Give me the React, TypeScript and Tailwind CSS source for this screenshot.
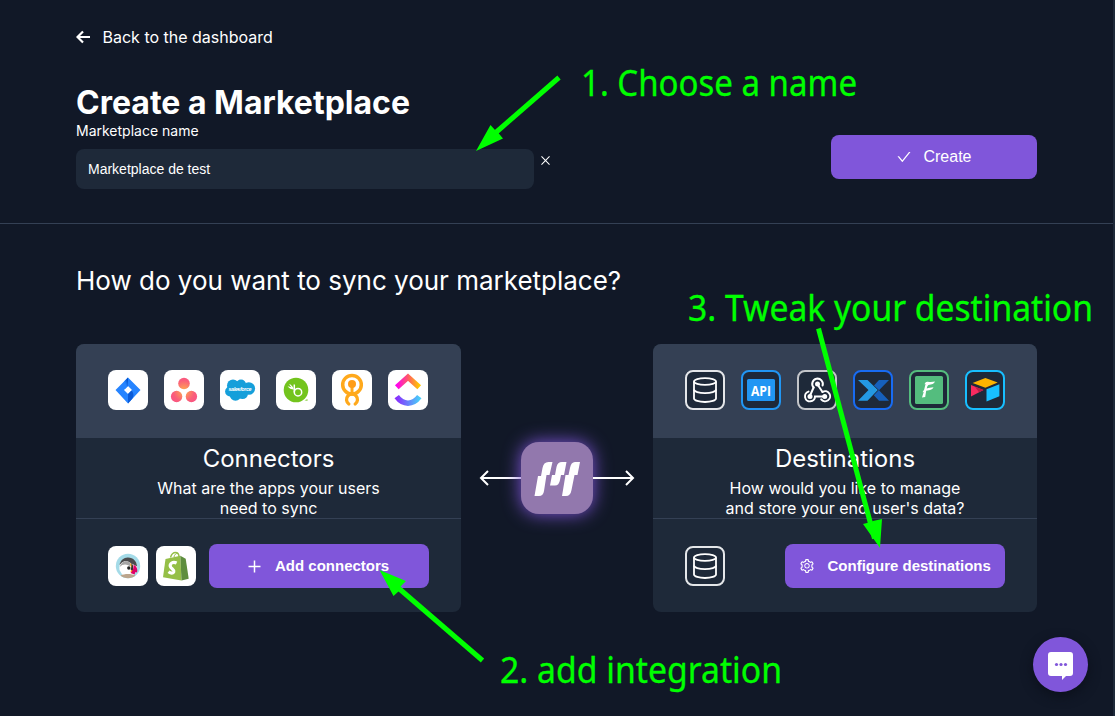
import React from "react";
import { AiOutlineCheck, AiOutlineClose, AiOutlineSetting } from "react-icons/ai";

function WhiteTile({ children }: { children: React.ReactNode }) {
  return (
    <div className="flex size-10 items-center justify-center overflow-hidden rounded-lg bg-white">
      <svg viewBox="0 0 40 40" className="size-10">{children}</svg>
    </div>
  );
}

function DarkTile({ border, children }: { border: string; children: React.ReactNode }) {
  return (
    <div className={`flex size-10 items-center justify-center overflow-hidden rounded-lg border-2 bg-[#1e2939] ${border}`}>
      <svg viewBox="0 0 40 40" className="size-10 shrink-0">{children}</svg>
    </div>
  );
}

function DatabaseMark() {
  return (
    <g fill="none" stroke="#fff" strokeWidth="1.8">
      <ellipse cx="20" cy="11.5" rx="11" ry="3.3" />
      <path d="M9 11.5v17c0 1.900 4.900 3.500 11 3.500s11-1.600 11-3.500v-17" />
      <path d="M9 19.500c0 2 4.900 3.600 11 3.600s11-1.600 11-3.600" />
    </g>
  );
}

function Jira() {
  return (
    <WhiteTile>
      <defs>
        <linearGradient id="jiraTop" x1="1" y1="0" x2="0.3" y2="0.7">
          <stop offset="0.2" stopColor="#0052cc" />
          <stop offset="0.8" stopColor="#2684ff" />
        </linearGradient>
      </defs>
      <path d="M20 7.500 32.500 20 20 33.500 7.500 20ZM20 16l-4 4 4 4 4-4Z" fill="#2684ff" fillRule="evenodd" />
      <path d="M20 7.500v8.500l-3 3c-2-2-2.500-5-.5-8Z" fill="url(#jiraTop)" />
      <path d="M20 33.500V24l3.500-3.500c2 2 2.800 5 .5 8.500Z" fill="#0b5bd8" />
    </WhiteTile>
  );
}

function Asana() {
  return (
    <WhiteTile>
      <defs>
        <radialGradient id="asana" gradientUnits="userSpaceOnUse" cx="20" cy="21" r="15">
          <stop offset="0" stopColor="#ffb04a" />
          <stop offset="0.7" stopColor="#fa5e7a" />
          <stop offset="1" stopColor="#f95484" />
        </radialGradient>
      </defs>
      <g fill="url(#asana)">
        <circle cx="20" cy="13.500" r="5.800" />
        <circle cx="12.600" cy="26.500" r="5.700" />
        <circle cx="27.400" cy="26.500" r="5.700" />
      </g>
    </WhiteTile>
  );
}

function Salesforce() {
  return (
    <WhiteTile>
      <g fill="#159fda">
        <circle cx="13" cy="15.500" r="6" /><circle cx="21" cy="14.500" r="5" />
        <circle cx="28.800" cy="18.500" r="6.300" /><circle cx="10" cy="21.500" r="4.900" />
        <circle cx="15.500" cy="25" r="5.800" /><circle cx="22.500" cy="23.500" r="5.500" />
      </g>
      <text x="20" y="21" textAnchor="middle" textLength="23" fontFamily="Liberation Sans, sans-serif" fontStyle="italic" fontWeight="bold" fontSize="5.400" fill="#fff">salesforce</text>
    </WhiteTile>
  );
}

function Bamboo() {
  return (
    <WhiteTile>
      <circle cx="20" cy="20" r="12.300" fill="#73c41d" />
      <path d="m28.500 30.300 3-1v1.500Z" fill="#73c41d" />
      <path d="M18.300 14.500v7.800" fill="none" stroke="#fff" strokeWidth="1.500" />
      <circle cx="22" cy="22.200" r="3.700" fill="none" stroke="#fff" strokeWidth="1.500" />
      <path d="M18 19.500c-2.700 0-5-1.300-6.500-3.300 1.600.3 2.800.5 4 1.100-1-.8-1.900-2-2.200-3.500 2 1.200 3.700 2.800 4.700 5.700Z" fill="#fff" />
    </WhiteTile>
  );
}

function Keyhole() {
  return (
    <WhiteTile>
      <g fill="none" stroke="#ffa91c" strokeWidth="3.500">
        <circle cx="20" cy="14.700" r="9.300" />
        <path d="M20 15v10" strokeWidth="3" />
        <path d="M16.800 34a5.500 5.500 0 1 1 6.400 0" strokeLinecap="round" strokeWidth="3.300" />
      </g>
      <circle cx="20" cy="14" r="4" fill="#ff9d18" />
    </WhiteTile>
  );
}

function ClickUp() {
  return (
    <WhiteTile>
      <defs>
        <linearGradient id="cuTop"><stop stopColor="#ff02f0" /><stop offset="0.5" stopColor="#ff5a66" /><stop offset="1" stopColor="#ffc800" /></linearGradient>
        <linearGradient id="cuBottom"><stop stopColor="#8930fd" /><stop offset="1" stopColor="#49ccf9" /></linearGradient>
      </defs>
      <path d="M8.800 17.200 20 7.200l11.200 10" fill="none" stroke="url(#cuTop)" strokeWidth="5.500" />
      <path d="M8.700 26.700C15 35.300 25 35.300 31.300 26.700" fill="none" stroke="url(#cuBottom)" strokeWidth="5.500" />
    </WhiteTile>
  );
}

function Prestashop() {
  return (
    <WhiteTile>
      <circle cx="20" cy="20" r="12.200" fill="#a4dbe8" />
      <path d="M11.500 24c-1-8 3-12 8.500-12 6.500 0 10 5 9 12l-4 6H15Z" fill="#fff" />
      <path d="M11.500 19c.9-4.800 4.500-7.700 8.500-7.500 5.500 0 9 4 9 9l-3.500-2-3-1.500c-2-2-6-2.500-8.500-.5-1 .8-1.500 1.500-2.500 2.500Z" fill="#4b4b4d" />
      <path d="M11.700 21c1.500-5.600 7.300-7.500 10.800-4l-.8 3.500c-2.500-2.700-7-2.700-10 .5Z" fill="#a5a5a5" />
      <circle cx="20.800" cy="22" r="1.700" fill="#222" />
      <path d="M22.500 17c2 2 3 5 2 10l-2-1c1-3 1-5-.5-7Z" fill="#ffa51f" />
      <path d="M23.200 16.700c2 1.500 2.600 4.800 1.600 8l-2.300-1.200c1.200-2 1.200-4.500.7-6.800Z" fill="#333" />
      <path d="M25.500 18.700c3 1 4.500 4.500 3.500 7.800l-1.500-.5-1 2.500-4-1.500c2.600-2.500 3.200-5 3-8.300Z" fill="#df0067" />
      <path d="M12.500 29.500c4-2 11-2 15 0-4 3.500-11 3.500-15 0Z" fill="#bca58c" />
    </WhiteTile>
  );
}

function Shopify() {
  return (
    <WhiteTile>
      <path d="M14.500 11.500c1-3.500 3-5 5-5 2.500 0 3.500 2.300 3.600 4.500" fill="none" stroke="#95bf47" strokeWidth="1.400" />
      <path d="M18 11c.4-2.400 2-3.700 3.500-3.600" fill="none" stroke="#95bf47" />
      <path d="m9.500 13 14.800-3.200 1.200 24.700L7 31.200Z" fill="#95bf47" />
      <path d="m24.300 9.800 5.400 3 3 20-7.200 1.700Z" fill="#5e8e3e" />
      <path d="M20.600 17c-4-1.800-6.900.7-6.300 3.300.5 2.300 4.200 3 3.500 5.500-.6 1.900-2.900 1.700-5.300 0" fill="none" stroke="#fff" strokeWidth="3.200" />
    </WhiteTile>
  );
}

function Api() {
  return (
    <DarkTile border="border-[#2196f3]">
      <rect x="6" y="9" width="28" height="22" rx="1.500" fill="#2196f3" />
      <text x="20" y="25.500" textAnchor="middle" textLength="20" lengthAdjust="spacingAndGlyphs" fontFamily="Open Sans, sans-serif" fontWeight="bold" fontSize="15" fill="#fff">API</text>
    </DarkTile>
  );
}

function Webhook() {
  return (
    <DarkTile border="border-[#c3c5c9]">
      <g fill="none" stroke="#fff" strokeWidth="2" strokeLinecap="round">
        <path d="M16.600 17.500a5.300 5.300 0 1 1 9-2" />
        <path d="M11.500 21.600a5 5 0 1 0 6.500 4.800h8" />
        <path d="M25.500 22a5 5 0 1 1-1.300 7.300" />
        <path d="m20.500 14.500 5 7.500" />
        <path d="m16.600 17.500-3.300 7.500" />
      </g>
      <circle cx="20.500" cy="14" r="2.500" fill="#fff" />
      <circle cx="13" cy="26.400" r="2.500" fill="#fff" />
      <circle cx="27.700" cy="26.400" r="2.500" fill="#fff" />
    </DarkTile>
  );
}

function Xano() {
  return (
    <DarkTile border="border-[#186bf2]">
      <path d="M5 10h9.500l10.300 10L14.500 30.800H5L15.500 20Z" fill="#2499e3" />
      <path d="M26 10h10L26 20.300 36 30.800H26L20.800 25.200l5-5.200L21 15.500Z" fill="#1660bc" />
    </DarkTile>
  );
}

function Forest() {
  return (
    <DarkTile border="border-[#54bd7e]">
      <rect x="6" y="6" width="28" height="28" rx="1.500" fill="#54bd7e" />
      <path d="M26 11.500c-1 2.600-3 3-6.600 3.500-1 1-1.400 2-1.600 3.500 2-.9 4-.7 6.700-1.300-1 2.200-3 2.800-7.300 3.600l-1 6.300-3.200.4 1.700-5.600-1.200.4 1.700-2.800 1.400-5.700-1 .7c.4-2.300 1.700-3.200 4.300-2.600 2.300.2 4.500 0 6.100-.4Z" fill="#fff" />
    </DarkTile>
  );
}

function Airtable() {
  return (
    <DarkTile border="border-[#18bfff]">
      <path d="m20.400 8 12.300 4.500-12.300 5.200L7.600 13Z" fill="#fcb400" />
      <path d="m21.500 19.300 12.900-5v11.900l-12.900 5.200Z" fill="#18bfff" />
      <path d="m6 15 12.500 5L6 26.500Z" fill="#f82b60" />
      <path d="m10 16.700 8.500 3.300-4.500 2.300Z" fill="#ba1e45" />
    </DarkTile>
  );
}

const buttonStyle = "flex h-11 items-center rounded-lg bg-[#8056da] font-['Liberation_Sans',sans-serif] text-white";

export default function App() {
  return (
    <main className="relative h-[716px] w-[1115px] overflow-hidden bg-[#111827] font-['Inter',sans-serif] text-white">
      <header className="h-[224px] border-b border-[#344054] pl-[76px] pr-[78px] pt-[25px]">
        <a className="flex h-6 items-center gap-[11.500px] text-base leading-6">
          <svg className="h-[14px] w-[15px]" viewBox="0 0 15 14" fill="none" stroke="currentColor" strokeWidth="2.2">
            <path d="M14 7H1.500M7 1.500 1.500 7 7 12.500" />
          </svg>
          Back to the dashboard
        </a>
        <div className="flex justify-between">
          <div className="pt-[34px]">
            <h1 className="text-[32px] font-bold leading-10">Create a Marketplace</h1>
            <label className="-mt-px block text-sm leading-[18px]">Marketplace name</label>
            <div className="mt-[9px] flex items-start">
              <div className="flex h-10 w-[458px] items-center rounded-lg bg-[#1e2939] pl-3 font-['Liberation_Sans',sans-serif] text-sm">Marketplace de test</div>
              <AiOutlineClose className="ml-[5px] mt-[5px] size-[13px]" />
            </div>
          </div>
          <button className={`${buttonStyle} mt-[86px] w-[206px] justify-center gap-[11px] text-base`}>
            <AiOutlineCheck className="size-4" />Create
          </button>
        </div>
      </header>

      <section className="pl-[76px] pr-[78px] pt-[41px]">
        <h2 className="text-[26px] leading-8 tracking-[-0.01px]">How do you want to sync your marketplace?</h2>
        <div className="mt-[47px] flex">
          <article className="h-[268px] w-[385px] overflow-hidden rounded-lg bg-[#1e2939]">
            <div className="flex h-[94px] gap-4 bg-[#344054] pl-8 pt-[26px]">
              <Jira /><Asana /><Salesforce /><Bamboo /><Keyhole /><ClickUp />
            </div>
            <div className="h-[81px] border-b border-[#344054] pt-[5px] text-center">
              <h3 className="text-2xl leading-8">Connectors</h3>
              <p className="mt-[3px] text-base leading-5">What are the apps your users<br />need to sync</p>
            </div>
            <div className="flex items-center pl-8 pt-[25px]">
              <Prestashop />
              <div className="ml-2"><Shopify /></div>
              <button className={`${buttonStyle} ml-[13px] w-[220px] pl-[38px] text-[15px] font-bold`}>
                <svg className="mr-[13px] size-[15px]" viewBox="0 0 15 15" stroke="currentColor" strokeWidth="1.5">
                  <path d="M7.500 1.500v12M1.500 7.500h12" />
                </svg>
                Add connectors
              </button>
            </div>
          </article>

          <div className="flex w-[192px] items-start justify-center pt-[98px]">
            <svg className="mt-[25px] h-[22px] w-[42px]" viewBox="0 0 42 22" fill="none" stroke="white" strokeWidth="2">
              <path d="M42 11H2m7-7-7 7 7 7" />
            </svg>
            <div className="flex size-[72px] items-center justify-center rounded-[18px] bg-[#9278ad] shadow-[0_0_18px_#8056da]">
              <svg viewBox="0 0 72 72" className="size-[72px]" fill="white">
                <path d="M21.500 26q1-6 6-6h4l-3 13h-3l-2.500 16q-.7 5-5 5h-4.500l3.500-20h3Z" />
                <path d="M35.500 25q1-5 5.500-5h4.500l-2.500 13h-3l-1 5q-1 5.500-5 5.500h-5l2-10.500h3Z" />
                <path d="M49 26q1-6 5-6h5l-2.500 13h-3L50.500 48q-1 6-5.500 6h-4l3.500-21h3Z" />
              </svg>
            </div>
            <svg className="mt-[25px] h-[22px] w-[42px]" viewBox="0 0 42 22" fill="none" stroke="white" strokeWidth="2">
              <path d="M0 11h40m-7-7 7 7-7 7" />
            </svg>
          </div>

          <article className="h-[268px] w-[384px] overflow-hidden rounded-lg bg-[#1e2939]">
            <div className="flex h-[94px] gap-4 bg-[#344054] pl-8 pt-[26px]">
              <DarkTile border="border-[#e4e6e9]"><DatabaseMark /></DarkTile>
              <Api /><Webhook /><Xano /><Forest /><Airtable />
            </div>
            <div className="h-[81px] border-b border-[#344054] pt-[5px] text-center">
              <h3 className="text-2xl leading-8">Destinations</h3>
              <p className="mt-[3px] text-base leading-5">How would you like to manage<br />and store your end user's data?</p>
            </div>
            <div className="flex items-center pl-8 pt-[25px]">
              <DarkTile border="border-[#e4e6e9]"><DatabaseMark /></DarkTile>
              <button className={`${buttonStyle} ml-[60px] w-[220px] pl-[13.500px] text-[15px] font-bold`}>
                <AiOutlineSetting className="mr-[13px] size-4" />Configure destinations
              </button>
            </div>
          </article>
        </div>
      </section>

      <div className="absolute right-0 top-0 h-full w-0.5 bg-[#1e2939]" />
      <button className="absolute left-[1033px] top-[637px] flex size-[55px] items-center justify-center rounded-full bg-[#8056da] shadow-[0_4px_12px_#0b101b]">
        <svg className="size-[55px]" viewBox="0 0 55 55">
          <path d="M18 15h19a3 3 0 0 1 3 3v18a3 3 0 0 1-3 3h-4l-4 4v-4H18a3 3 0 0 1-3-3V18a3 3 0 0 1 3-3Z" fill="white" />
          <g fill="#8056da"><circle cx="23.500" cy="27.500" r="1.600" /><circle cx="28" cy="27.500" r="1.600" /><circle cx="32.500" cy="27.500" r="1.600" /></g>
        </svg>
      </button>

      <svg className="pointer-events-none absolute inset-0 h-full w-full" viewBox="0 0 1115 716" fill="#00ff00">
        <g stroke="#00ff00" strokeWidth="5">
          <path d="M559 77.500 493 135" />
          <path d="m482.500 660.500-87-75" />
          <path d="m818.500 328.500 56 210" />
        </g>
        <path d="m476 151 14.500-26 4.500 5 3 2.500 5 6Z" />
        <path d="m379.500 570 26.500 11-6 6-1 4-5.500 5Z" />
        <path d="m880 548-17-24 8-2 2-1 9-2Z" />
        <g fontFamily="Noto Sans, sans-serif" fontSize="35.500" stroke="#00ff00" strokeWidth="0.3">
          <text x="581" y="96" textLength="276" lengthAdjust="spacingAndGlyphs">1. Choose a name</text>
          <text x="500" y="683" textLength="282" lengthAdjust="spacingAndGlyphs">2. add integration</text>
          <text x="688" y="321" textLength="405" lengthAdjust="spacingAndGlyphs">3. Tweak your destination</text>
        </g>
      </svg>
    </main>
  );
}
